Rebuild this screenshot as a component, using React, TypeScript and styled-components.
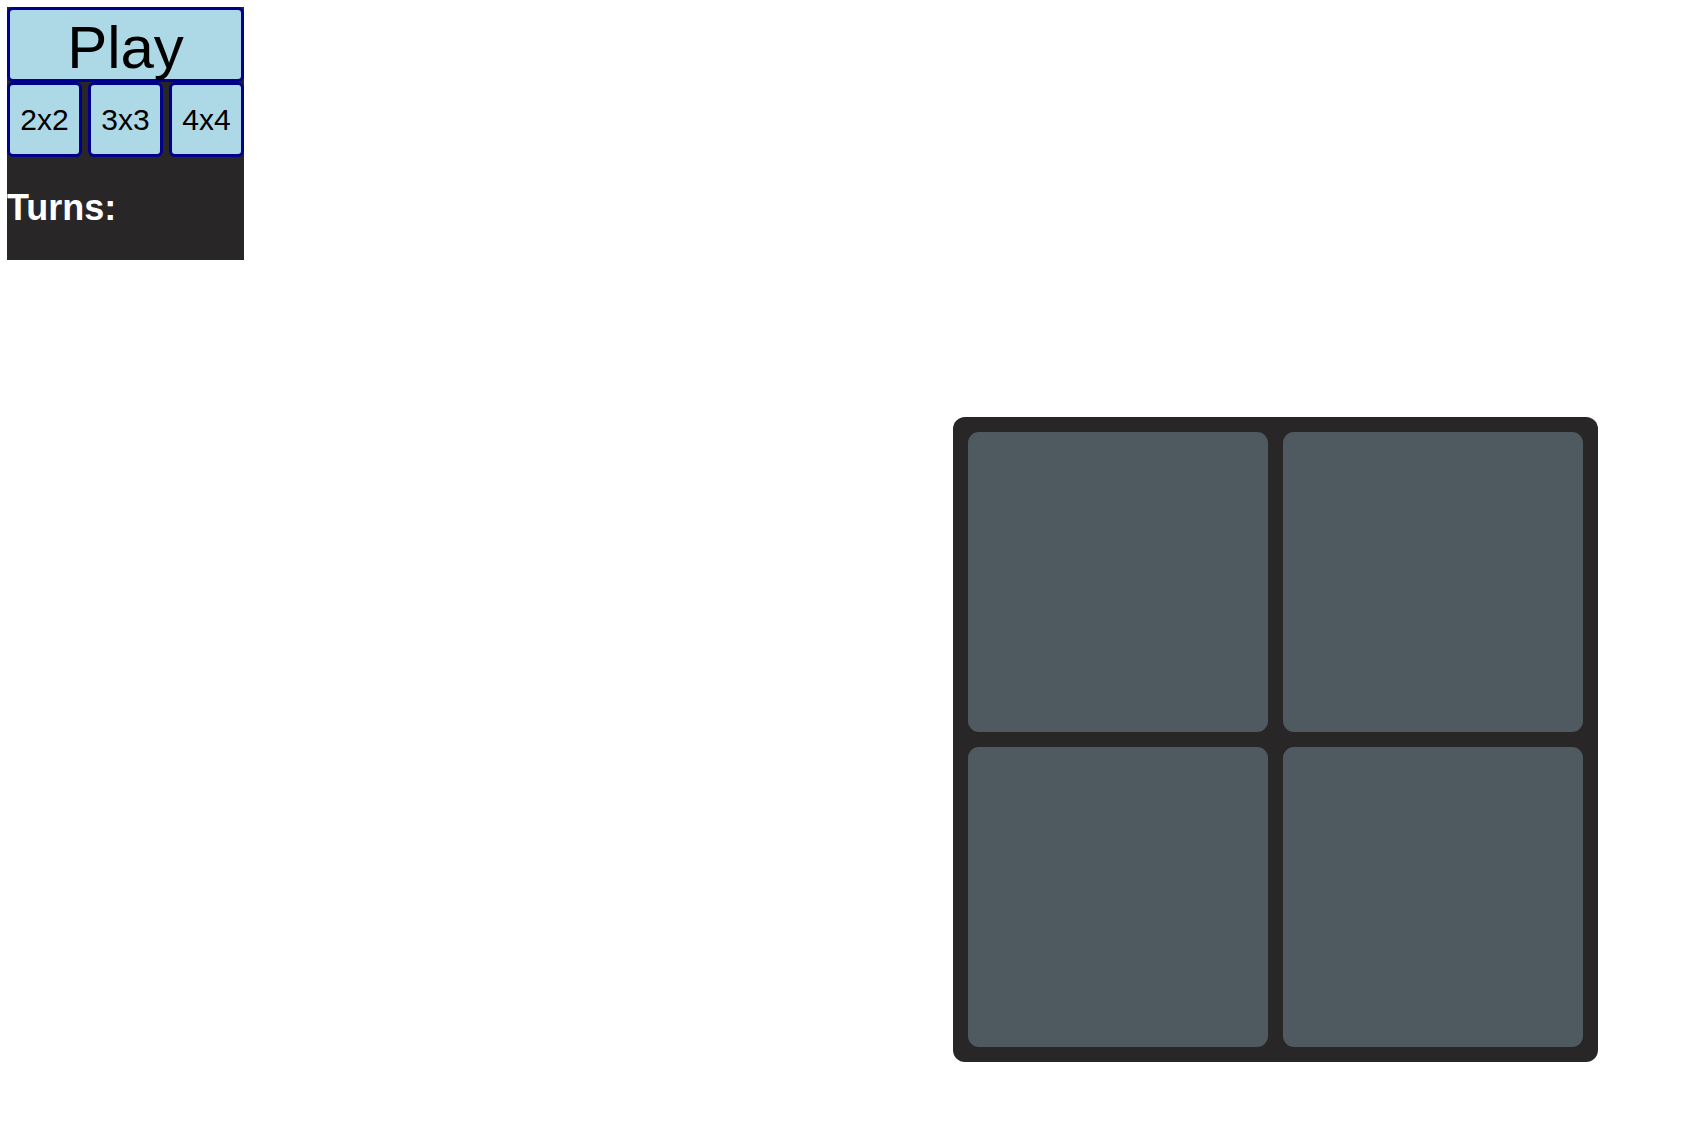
import React from "react";
import styled, { createGlobalStyle } from "styled-components";

const GlobalStyle = createGlobalStyle`
  html, body {
    margin: 0;
    padding: 0;
    background: #ffffff;
  }
  body {
    font-family: "Liberation Sans", Arial, sans-serif;
  }
`;

const Page = styled.div`
  padding: 7px;
  display: flex;
  flex-direction: column;
  align-items: flex-start;
`;

const Panel = styled.div`
  width: 237px;
  height: 253px;
  background: #282627;
  display: flex;
  flex-direction: column;
`;

const PlayButton = styled.button`
  box-sizing: border-box;
  width: 237px;
  height: 75px;
  margin: 0;
  padding: 7px 0 0;
  background: #add8e6;
  border: 3px solid #00008b;
  border-radius: 6px;
  font-family: "Liberation Sans", Arial, sans-serif;
  font-size: 60px;
  color: #000;
  line-height: 1;
`;

const SizeRow = styled.div`
  display: flex;
  gap: 6px;
`;

const SizeButton = styled.button`
  box-sizing: border-box;
  width: 75px;
  height: 75px;
  margin: 0;
  padding: 0;
  background: #add8e6;
  border: 3px solid #00008b;
  border-radius: 6px;
  font-family: "Liberation Sans", Arial, sans-serif;
  font-size: 30px;
  color: #000;
`;

const Turns = styled.h2`
  margin: 0;
  padding-top: 30px;
  font-family: "Liberation Sans", Arial, sans-serif;
  font-weight: bold;
  font-size: 36px;
  line-height: 41px;
  color: #ffffff;
`;

const Board = styled.div`
  margin: 157px 0 0 946px;
  box-sizing: border-box;
  width: 645px;
  height: 645px;
  padding: 15px;
  background: #282627;
  border-radius: 12px;
  display: grid;
  grid-template-columns: repeat(2, 1fr);
  grid-template-rows: repeat(2, 1fr);
  gap: 15px;
`;

const Cell = styled.div`
  background: #4f5a60;
  border-radius: 11px;
`;

export default function App() {
  return (
    <>
      <GlobalStyle />
      <Page>
        <Panel>
          <PlayButton>Play</PlayButton>
          <SizeRow>
            <SizeButton>2x2</SizeButton>
            <SizeButton>3x3</SizeButton>
            <SizeButton>4x4</SizeButton>
          </SizeRow>
          <Turns>Turns:</Turns>
        </Panel>
        <Board>
          <Cell />
          <Cell />
          <Cell />
          <Cell />
        </Board>
      </Page>
    </>
  );
}
